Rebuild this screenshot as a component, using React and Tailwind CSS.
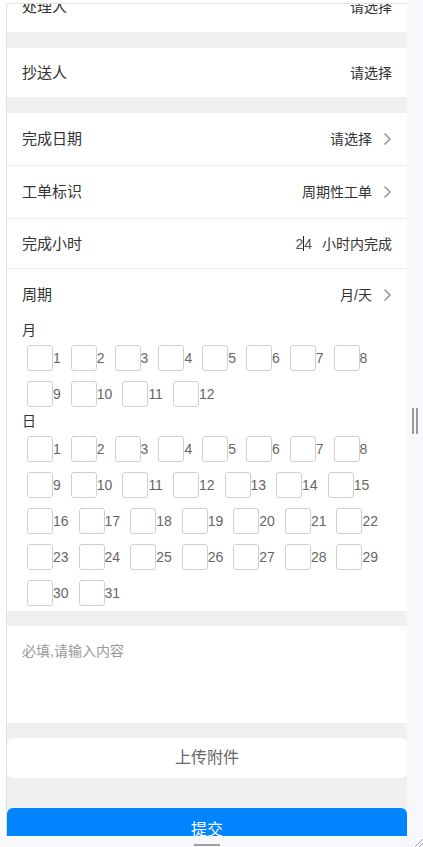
const font = { fontFamily: '"Liberation Sans", "Noto Sans CJK SC", sans-serif' };

function Arrow() {
  return (
    <svg width="9" height="14" viewBox="0 0 9 14" className="ml-[11px] shrink-0">
      <path d="M1.5 1.5l5.5 5.5-5.5 5.5" fill="none" stroke="#999" strokeWidth="1.6" />
    </svg>
  );
}

function Row({ label, value, arrow, h, border }) {
  return (
    <div
      className={`flex items-center justify-between px-[15px] bg-white ${h} ${border ? "border-b border-[#ececec]" : ""}`}
    >
      <span className="text-[15px] text-[#333] leading-[20px]">{label}</span>
      <div className="flex items-center">
        <span className="text-[14px] text-[#333] leading-[20px]">{value}</span>
        {arrow && <Arrow />}
      </div>
    </div>
  );
}

function Check({ n }) {
  return (
    <div className="flex items-center m-[5px]">
      <div className="w-[26px] h-[26px] border border-[#d0d0d0] rounded-[3px] bg-white" />
      <span className="text-[14px] text-[#666] leading-[16px]">{n}</span>
    </div>
  );
}

const months = Array.from({ length: 12 }, (_, i) => i + 1);
const days = Array.from({ length: 31 }, (_, i) => i + 1);

export default function App() {
  return (
    <div className="w-[423px] h-[847px] bg-white flex flex-col overflow-hidden" style={font}>
      <div className="flex h-[836px]">
        <div className="w-[6px] bg-white" />
        <div className="w-[401px] flex flex-col pt-[3px] bg-white">
          <div className="flex-1 border-l border-t border-[#e2e2e2] overflow-hidden bg-[#f0f0f0]">
            <div className="-mt-[22px] flex flex-col">
              <Row label="处理人" value="请选择" h="h-[50px]" />
              <div className="h-[16px]" />
              <Row label="抄送人" value="请选择" h="h-[49px]" />
              <div className="h-[16px]" />

              <div className="bg-white flex flex-col">
                <Row label="完成日期" value="请选择" arrow h="h-[53px]" border />
                <Row label="工单标识" value="周期性工单" arrow h="h-[53px]" border />
                <div className="flex items-center justify-between px-[15px] h-[50px] border-b border-[#ececec]">
                  <span className="text-[15px] text-[#333] leading-[20px]">完成小时</span>
                  <div className="flex items-center">
                    <span className="flex items-center text-[14px] text-[#555] leading-[20px]">
                      2<span className="inline-block w-px h-[15px] bg-[#222]" />4
                    </span>
                    <span className="ml-[10px] text-[14px] text-[#333] leading-[20px]">小时内完成</span>
                  </div>
                </div>
                <Row label="周期" value="月/天" arrow h="h-[51px]" />

                <div className="px-[15px] h-[20px] text-[14px] leading-[20px] text-[#333]">月</div>
                <div className="flex flex-wrap px-[15px]">
                  {months.map((n) => (
                    <Check key={n} n={n} />
                  ))}
                </div>
                <div className="px-[15px] h-[19px] text-[14px] leading-[19px] text-[#333]">日</div>
                <div className="flex flex-wrap px-[15px]">
                  {days.map((n) => (
                    <Check key={n} n={n} />
                  ))}
                </div>
              </div>

              <div className="h-[15px]" />
              <div className="bg-white h-[97px] px-[15px] pt-[15px]">
                <div className="text-[14px] leading-[20px] text-[#999]">必填,请输入内容</div>
              </div>
              <div className="h-[15px]" />
              <button className="h-[40px] bg-white rounded-[6px] text-[16px] text-[#666]">上传附件</button>
              <div className="h-[30px]" />
              <button className="h-[44px] bg-[#0084ff] rounded-[6px] text-[16px] text-white">提交</button>
            </div>
          </div>
        </div>
        <div className="w-[16px] bg-[#f7f8fc] flex items-center justify-center gap-[2px] pt-[6px]">
          <div className="w-[2px] h-[26px] bg-[#9a9a9a]" />
          <div className="w-[2px] h-[26px] bg-[#9a9a9a]" />
        </div>
      </div>
      <div className="h-[11px] bg-[#f7f8fc] flex">
        <div className="w-[407px] flex justify-center pl-[6px]">
          <div className="w-[26px] h-[2px] mt-[8px] bg-[#a0a0a0]" />
        </div>
        <svg width="16" height="11" viewBox="0 0 16 11">
          <path d="M8 11L16 3M12 11L16 7" stroke="#aaa" strokeWidth="1" />
        </svg>
      </div>
    </div>
  );
}
